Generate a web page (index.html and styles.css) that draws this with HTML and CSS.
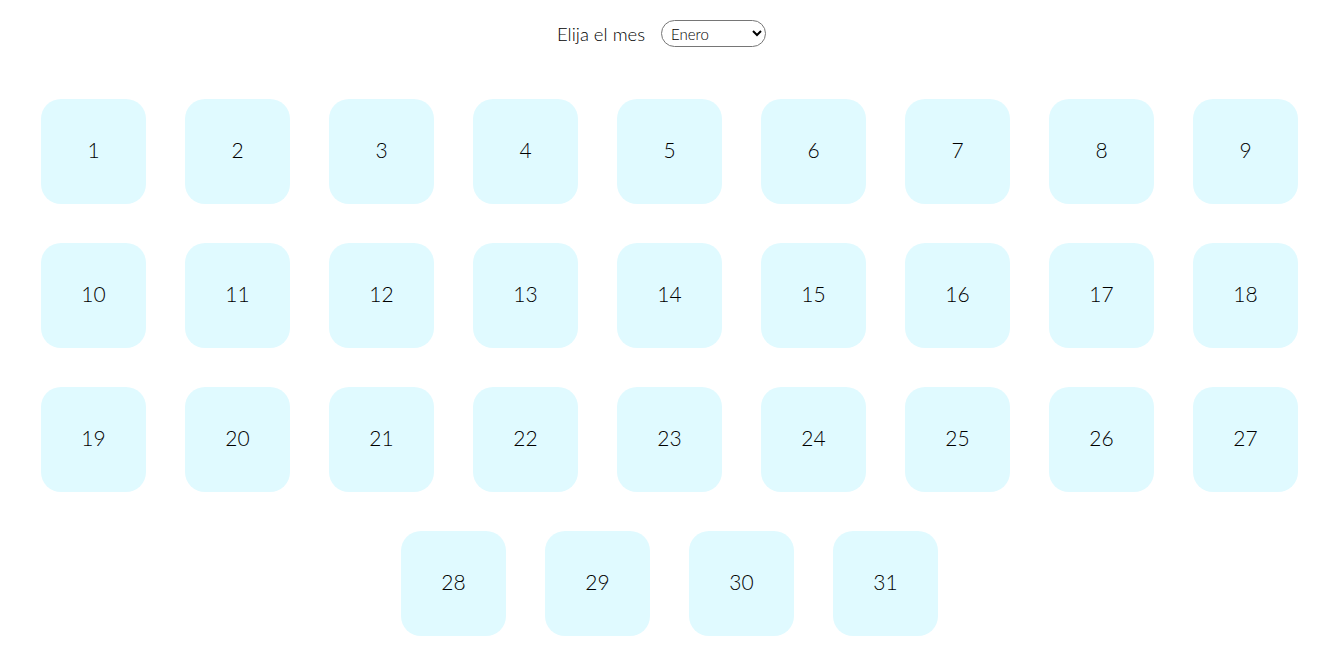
FILE: index.html
```html
<!DOCTYPE html>
<html lang="es">
<head>
<meta charset="utf-8">
<title>Calendario</title>
<link rel="stylesheet" href="styles.css">
</head>
<body>
<header class="header">
  <label class="label" for="mes">Elija el mes</label>
  <select id="mes" class="select">
    <option>Enero</option>
    <option>Febrero</option>
    <option>Marzo</option>
  </select>
</header>
<main class="days">
  <div class="day">1</div><div class="day">2</div><div class="day">3</div><div class="day">4</div><div class="day">5</div><div class="day">6</div><div class="day">7</div><div class="day">8</div><div class="day">9</div>
  <div class="day">10</div><div class="day">11</div><div class="day">12</div><div class="day">13</div><div class="day">14</div><div class="day">15</div><div class="day">16</div><div class="day">17</div><div class="day">18</div>
  <div class="day">19</div><div class="day">20</div><div class="day">21</div><div class="day">22</div><div class="day">23</div><div class="day">24</div><div class="day">25</div><div class="day">26</div><div class="day">27</div>
  <div class="day">28</div><div class="day">29</div><div class="day">30</div><div class="day">31</div>
</main>
</body>
</html>
```
FILE: styles.css
```css
html, body {
  margin: 0;
  padding: 0;
  background: #ffffff;
}
body {
  font-family: "Lato", "Open Sans", sans-serif;
  font-weight: 300;
  color: #000000;
}
.header {
  display: flex;
  justify-content: center;
  align-items: center;
  gap: 16px;
  padding: 20px 14px 0 0;
  height: 27px;
}
.label {
  font-size: 18.5px;
}
.select {
  width: 105px;
  height: 27px;
  border: 1px solid #767676;
  border-radius: 14px;
  padding: 0 4px 0 5px;
  font-family: "Lato", sans-serif;
  font-weight: 300;
  font-size: 15px;
  color: #000000;
  background: #fff;
}
.days {
  display: flex;
  flex-wrap: wrap;
  justify-content: center;
  gap: 39px;
  padding: 52px 0 0 2px;
}
.day {
  width: 105px;
  height: 105px;
  border-radius: 20px;
  background: #e0faff;
  display: flex;
  align-items: center;
  justify-content: center;
  font-size: 21px;
  padding-bottom: 5px;
  box-sizing: border-box;
}
```
